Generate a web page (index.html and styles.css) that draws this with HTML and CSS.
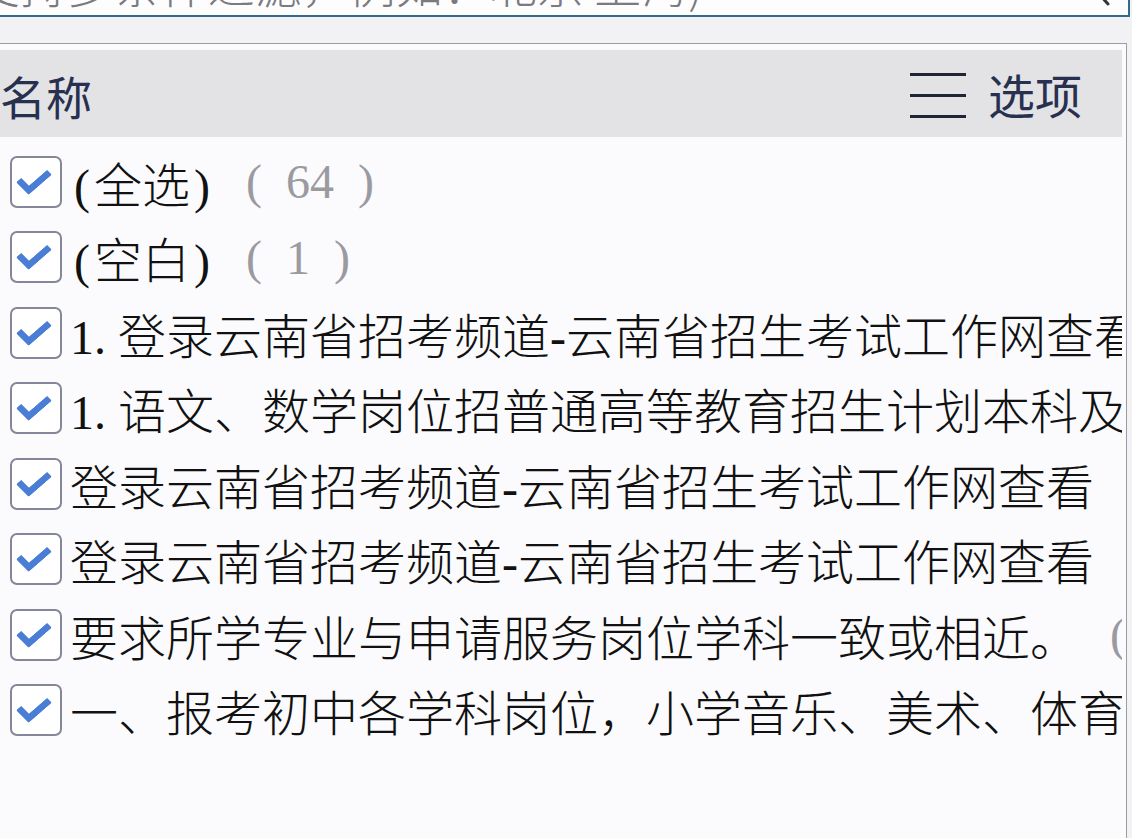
FILE: index.html
```html
<!DOCTYPE html>
<html lang="zh-CN">
<head>
  <meta charset="UTF-8" />
  <meta name="viewport" content="width=device-width, initial-scale=1.0" />
  <title>筛选</title>
  <link rel="stylesheet" href="styles.css">
</head>
<body>
  <div class="search">
    <span class="search-text">(支持多条件过滤，例如：北京 上海)</span>
    <svg class="search-icon" width="40" height="40" viewBox="0 0 40 40">
      <circle cx="16" cy="14" r="11" fill="none" stroke="#333" stroke-width="3"/>
      <path d="M24 22 L33 32" stroke="#333" stroke-width="3" stroke-linecap="round"/>
    </svg>
  </div>

  <div class="panel">
    <div class="panel-head">
      <span class="head-title">名称</span>
      <span class="head-options">
        <svg class="menu-icon" width="56" height="46" viewBox="0 0 56 46">
          <rect x="0" y="0" width="56" height="3" fill="#1f2535"/>
          <rect x="0" y="21" width="56" height="3" fill="#1f2535"/>
          <rect x="0" y="42" width="56" height="3" fill="#1f2535"/>
        </svg>
        选项
      </span>
    </div>

    <ul class="list">
      <li class="item">
        <span class="check"></span>
        <span class="label"><span class="p">(</span>全选<span class="p">)</span></span>
        <span class="count">(&nbsp;&nbsp;64&nbsp;&nbsp;)</span>
      </li>
      <li class="item">
        <span class="check"></span>
        <span class="label"><span class="p">(</span>空白<span class="p">)</span></span>
        <span class="count">(&nbsp;&nbsp;1&nbsp;&nbsp;)</span>
      </li>
      <li class="item">
        <span class="check"></span>
        <span class="label">1. 登录云南省招考频道-云南省招生考试工作网查看</span>
      </li>
      <li class="item">
        <span class="check"></span>
        <span class="label">1. 语文、数学岗位招普通高等教育招生计划本科及</span>
      </li>
      <li class="item">
        <span class="check"></span>
        <span class="label">登录云南省招考频道-云南省招生考试工作网查看</span>
      </li>
      <li class="item">
        <span class="check"></span>
        <span class="label">登录云南省招考频道-云南省招生考试工作网查看</span>
      </li>
      <li class="item">
        <span class="check"></span>
        <span class="label">要求所学专业与申请服务岗位学科一致或相近。</span>
        <span class="count">(&nbsp;&nbsp;1&nbsp;&nbsp;)</span>
      </li>
      <li class="item">
        <span class="check"></span>
        <span class="label">一、报考初中各学科岗位，小学音乐、美术、体育</span>
      </li>
    </ul>
  </div>
</body>
</html>
```

FILE: styles.css
```css
body {
  margin: 0;
  background: #f2f2f4;
  font-family: "Noto Sans CJK SC", sans-serif;
  overflow: hidden;
  height: 838px;
}

/* search box, scrolled mostly out of view */
.search {
  box-sizing: border-box;
  width: 1130px;
  height: 54px;
  margin-top: -37px;
  background: #fdfdfe;
  border-right: 2px solid #2e6e8c;
  border-bottom: 2px solid #2e6e8c;
  display: flex;
  align-items: center;
  justify-content: space-between;
  overflow: hidden;
}
.search-text {
  margin-left: -42px;
  margin-bottom: 12px;
  font-size: 47px;
  font-weight: 300;
  line-height: 52px;
  color: #7a7a80;
  white-space: nowrap;
}
.search-icon {
  margin-right: 13px;
  margin-top: 6px;
}

.panel {
  box-sizing: border-box;
  width: 1128px;
  height: 800px;
  margin-top: 26px;
  margin-left: -1px;
  padding: 6px 4px 0 0;
  background: #fbfbfd;
  border: 1px solid #9a9ca6;
  overflow: hidden;
}

.panel-head {
  height: 87px;
  background: #e3e3e6;
  display: flex;
  align-items: center;
  justify-content: space-between;
  padding-right: 40px;
  color: #283050;
  font-size: 46px;
}
.head-title {
  margin-top: 2px;
}
.head-options {
  display: flex;
  align-items: center;
  gap: 22px;
  font-size: 47px;
}
.menu-icon {
  margin-top: 4px;
}

.list {
  list-style: none;
  margin: 0;
  padding: 7px 0 0 0;
  overflow: hidden;
}
.item {
  height: 75.5px;
  display: flex;
  align-items: center;
  padding-left: 10px;
  white-space: nowrap;
  font-family: "Liberation Serif", "Noto Sans CJK SC", serif;
  font-size: 48px;
  font-weight: 300;
  color: #111;
}
.check {
  flex: none;
  box-sizing: border-box;
  width: 52px;
  height: 52px;
  margin-right: 8px;
  border: 2px solid #84879a;
  border-radius: 7px;
  background: #fff;
  position: relative;
}
/* tick drawn with two borders of a rotated box */
.check::after {
  content: "";
  position: absolute;
  left: 13px;
  top: 5px;
  width: 11px;
  height: 24px;
  border-right: 7px solid #4a7dd6;
  border-bottom: 7px solid #4a7dd6;
  border-radius: 2px;
  transform: rotate(45deg) skewX(-4deg);
}
.label .p {
  display: inline-block;
  width: 24px;
  text-align: center;
}
.count {
  margin-left: 32px;
  color: #9a9aa0;
}
```
